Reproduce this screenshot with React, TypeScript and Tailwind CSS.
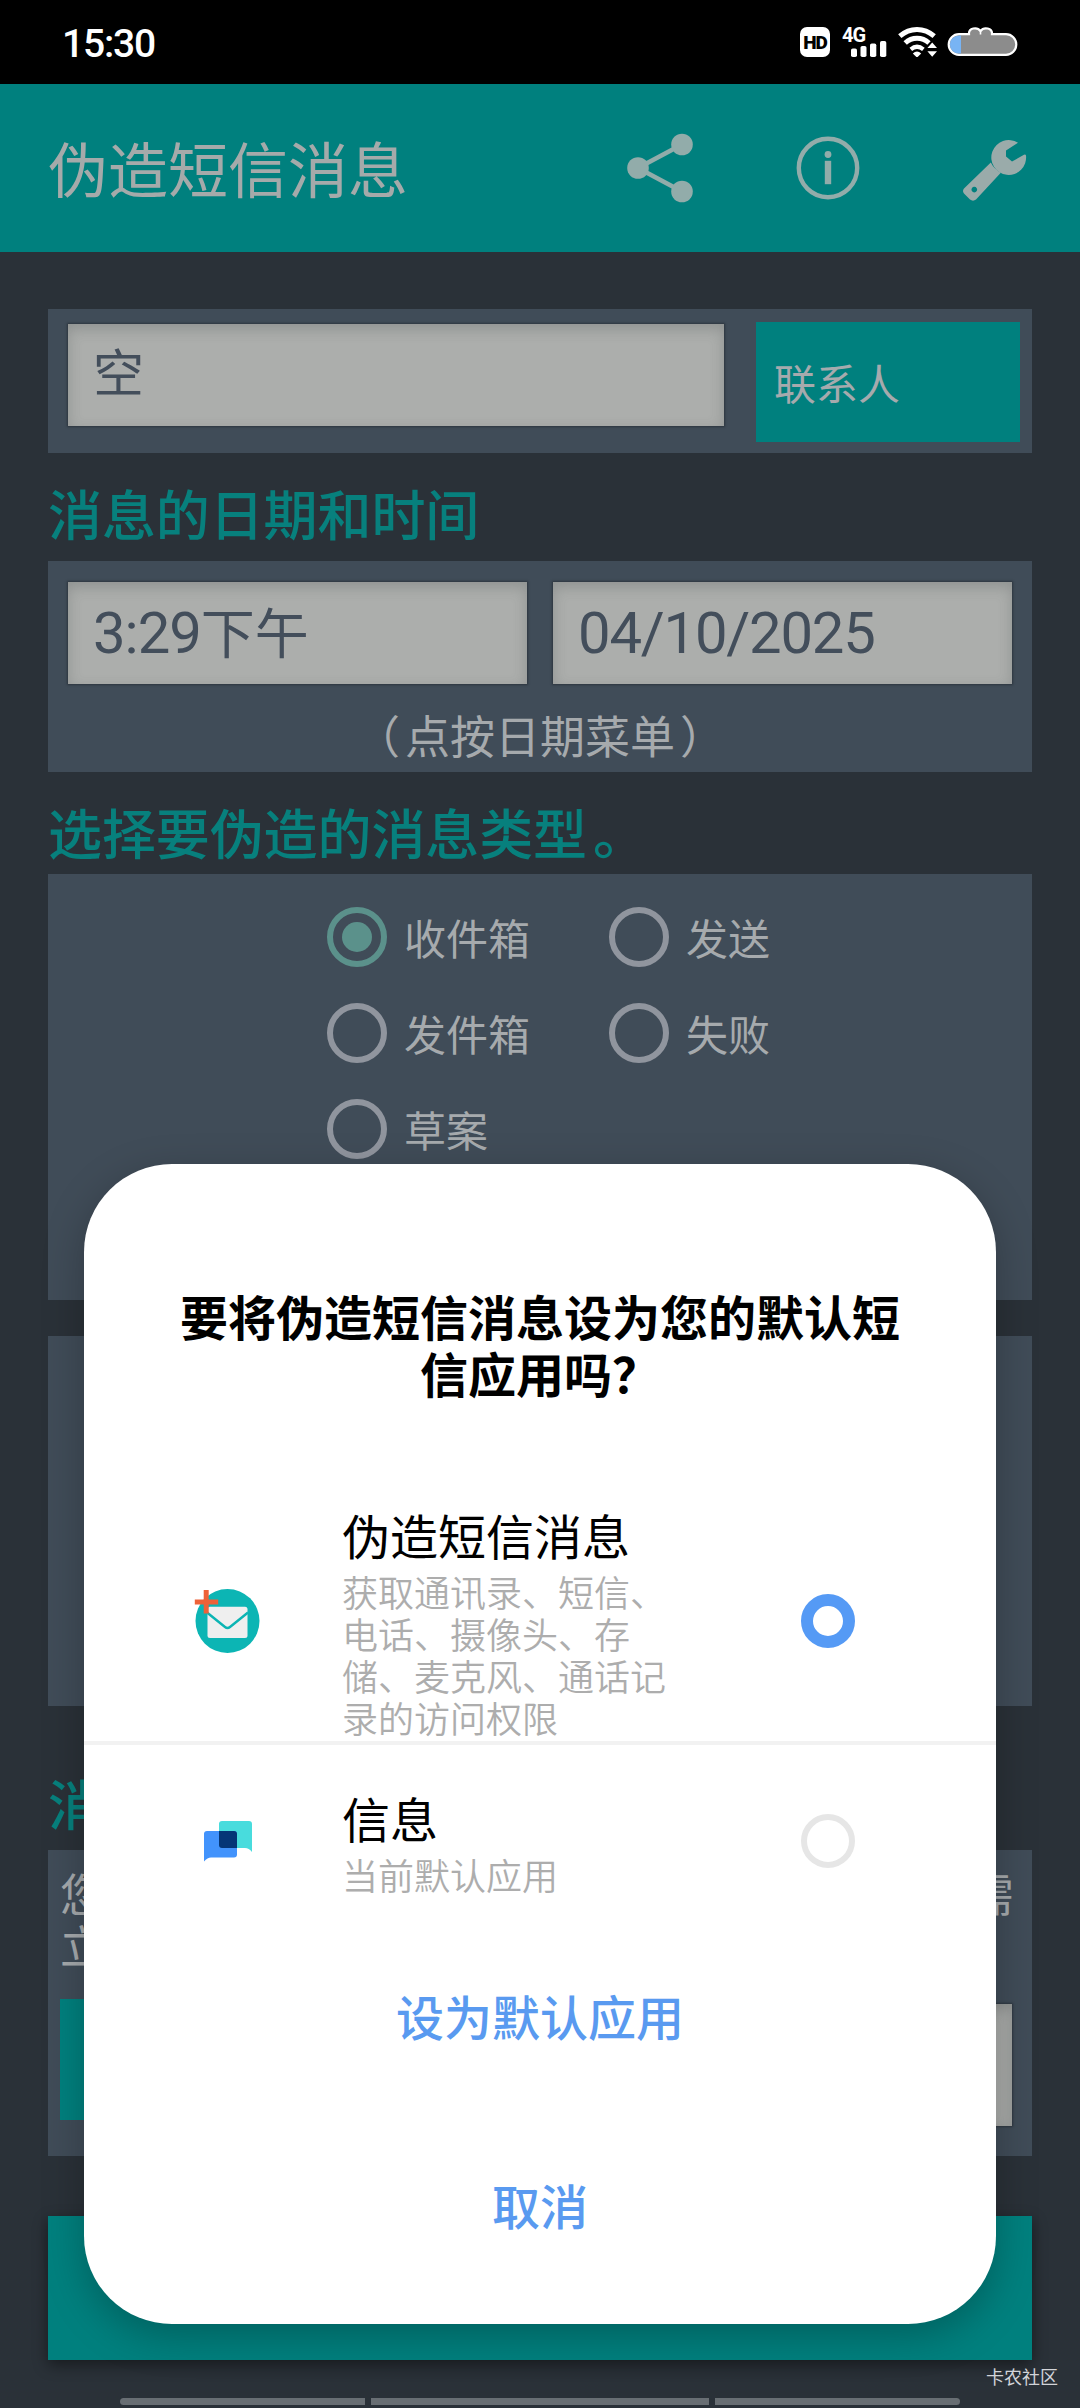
import { useState } from "react";

type AppOption = {
    id: string;
    name: string;
    detail: string;
};

const FOLDERS = ["收件箱", "发送", "发件箱", "失败", "草案"];

const APPS: AppOption[] = [
    {
        id: "fake",
        name: "伪造短信消息",
        detail: "获取通讯录、短信、电话、摄像头、存储、麦克风、通话记录的访问权限",
    },
    { id: "messages", name: "信息", detail: "当前默认应用" },
];

function StatusBar() {
    return (
        <div className="flex h-[84px] items-center justify-between bg-black pl-[62px] pr-[62px] text-white">
            <span className="font-[Roboto] text-[39px] leading-[44px] tracking-[-1.2px] font-medium pt-[4px]">
                15:30
            </span>
            <div className="flex items-center">
                <span className="flex h-[30px] w-[30px] items-center justify-center rounded-[7px] bg-white font-[Roboto] text-[19px] leading-none font-black tracking-[-1px] text-black">
                    HD
                </span>
                <div className="relative ml-[12px] h-[30px] w-[45px]">
                    <span className="absolute left-0 top-0 font-[Roboto] text-[20px] leading-[16px] font-bold tracking-[-1px]">
                        4G
                    </span>
                    <svg className="absolute inset-0" width="45" height="30" fill="#fff">
                        <rect x="9" y="21.5" width="6" height="8.5" rx="1.8" />
                        <rect x="18.5" y="19" width="6" height="11" rx="1.8" />
                        <rect x="28" y="16.5" width="6.3" height="13.5" rx="1.8" />
                        <rect x="38" y="14" width="6.3" height="16" rx="1.8" />
                    </svg>
                </div>
                <svg className="ml-[11px]" width="40" height="30" viewBox="0 0 40 30">
                    <g fill="none" stroke="#fff" strokeWidth="5">
                        <path d="M1.8 9.2C12 0.3 26 0.3 36.2 9.2" />
                        <path d="M7.2 16C14 9.8 24 9.8 31 16" />
                        <path d="M12.8 22.3C16.8 19 21.2 19 25.4 22.3" strokeWidth="4.2" />
                    </g>
                    <path
                        d="M14.8 26.4Q19 22.8 23.2 26.4L19 30.6Z"
                        fill="#fff"
                    />
                    <path d="M34.2 14L41 22H27.5Z" fill="#000" />
                    <path d="M34.2 15.5L39 21H29.4ZM29.4 24.2H39L34.2 29.8Z" fill="#fff" />
                </svg>
                <svg className="ml-[9px]" width="71" height="30" viewBox="0 0 71 30">
                    <path
                        d="M12 7.2H22C21.5 1 30 -0.6 33.5 4C37 -0.6 45.5 1 45 7.2H59A10.3 10.3 0 0 1 59 27.8H12A10.3 10.3 0 0 1 12 7.2Z"
                        fill="#8c8c8c"
                        stroke="#fff"
                        strokeWidth="2.2"
                    />
                    <path d="M14 8.4H12A9.1 9.1 0 0 0 12 26.6H14Z" fill="#78b4f4" />
                    <path d="M33.5 4V7.5" stroke="#fff" strokeWidth="1.6" />
                </svg>
            </div>
        </div>
    );
}

function Toolbar() {
    return (
        <header className="flex h-[168px] items-center bg-[#00807e] pl-[48px] pr-[51px]">
            <h1 className="flex-1 pb-[3px] text-[60px] leading-[72px] text-[#a5aaaa]">
                伪造短信消息
            </h1>
            <svg className="mr-[102px]" width="68" height="70" viewBox="0 0 68 70" fill="#92acaa">
                <path d="M56 11.5L12 35L56 58.5" fill="none" stroke="#92acaa" strokeWidth="4.6" />
                <circle cx="56" cy="11.5" r="10.8" />
                <circle cx="12" cy="35" r="10.8" />
                <circle cx="56" cy="58.5" r="10.8" />
            </svg>
            <svg className="mr-[103px]" width="64" height="64" viewBox="0 0 64 64" fill="#92acaa">
                <circle cx="32" cy="32" r="29.2" fill="none" stroke="#92acaa" strokeWidth="4.4" />
                <circle cx="32" cy="18.5" r="3.4" />
                <rect x="28.8" y="24.8" width="6.4" height="23.4" />
            </svg>
            <svg className="mt-[2px]" width="66" height="66" viewBox="1 0 66 66" fill="#9aabaa">
                <path d="M56 6.8A17.4 17.4 0 1 0 64 19.5Q63.5 18 62 18.8L50 25.6L44 20.5V14.5Z" />
                <path
                    fillRule="evenodd"
                    d="M28.8 26.6Q32 33 38.8 36.8L14 63.6Q11 65.8 8 63.6L2 57.4Q0 55 2 52.6ZM12.3 50.8a2.8 2.8 0 1 0 0.01 0Z"
                />
            </svg>
        </header>
    );
}

function Field({ className, children }: { className: string; children?: React.ReactNode }) {
    return (
        <div
            className={`flex items-center bg-[#acaeac] pl-[25px] text-[#434e5b] shadow-[inset_0_5px_14px_rgba(70,75,75,0.28),0_0_2px_1px_rgba(30,36,42,0.55)] ${className}`}
        >
            {children}
        </div>
    );
}

function SectionTitle({ children, className }: { children: React.ReactNode; className: string }) {
    return (
        <h2 className={`text-[54px] leading-[64px] font-medium tracking-[-0.1px] text-[#07807d] ${className}`}>
            {children}
        </h2>
    );
}

function FolderRadio({ label, checked, onSelect }: { label: string; checked: boolean; onSelect: () => void }) {
    return (
        <button className="flex h-[96px] items-center" onClick={onSelect}>
            <span
                className={`flex h-[60px] w-[60px] items-center justify-center rounded-full border-[6px] ${
                    checked ? "border-[#5b918b]" : "border-[#90959e]"
                }`}
            >
                {checked && <span className="h-[30px] w-[30px] rounded-full bg-[#5b918b]" />}
            </span>
            <span className="ml-[17px] text-[42px] leading-[50px] text-[#a6aaad]">{label}</span>
        </button>
    );
}

function FakeSmsIcon() {
    return (
        <svg width="68" height="70" viewBox="0 2 68 70">
            <circle cx="34.5" cy="37" r="32" fill="#0cb5b4" />
            <rect x="14.5" y="22.7" width="40" height="31.3" rx="2.5" fill="#efefef" />
            <path d="M14 28.5L32 43Q34.5 45 37 43L55 28.5" fill="none" stroke="#0cb5b4" strokeWidth="2.4" />
            <path d="M13.2 6V29.6M1.8 18H25.2" stroke="#ee6238" strokeWidth="5" />
        </svg>
    );
}

function MessagesIcon() {
    return (
        <svg width="68" height="70" viewBox="0 0 68 70">
            <path d="M29 15H56Q59 15 59 18V46Q56 42 52 42H29Q26 42 26 39V18Q26 15 29 15Z" fill="#48dcdd" />
            <path d="M14 25H41Q44 25 44 28V48.5Q44 51.5 41 51.5H18Q14.5 51.5 11 55.5V28Q11 25 14 25Z" fill="#4293fc" />
            <path d="M26 25H41Q44 25 44 28V42H29Q26 42 26 39Z" fill="#053677" />
        </svg>
    );
}

function DefaultAppDialog() {
    const [selected, setSelected] = useState("fake");

    return (
        <div className="absolute left-[84px] top-[1164px] flex h-[1160px] w-[912px] flex-col rounded-[88px] bg-white shadow-[0_12px_40px_rgba(0,0,0,0.25)]">
            <h3 className="px-[96px] pt-[123px] text-center text-[48px] leading-[57px] font-bold text-black">
                要将伪造短信消息设为您的默认短信应用吗？
            </h3>
            <div className="mt-[100px]">
                {APPS.map((app, i) => (
                    <button
                        key={app.id}
                        onClick={() => setSelected(app.id)}
                        className={`flex w-full items-center text-left ${
                            i === 0
                                ? "h-[244px] border-b-4 border-[#f2f2f2]"
                                : "h-[192px]"
                        }`}
                    >
                        <span className="ml-[109px] mr-[81px]">
                            {app.id === "fake" ? <FakeSmsIcon /> : <MessagesIcon />}
                        </span>
                        <span className="flex w-[326px] flex-col gap-[6px]">
                            <span className="text-[48px] leading-[60px] text-black">{app.name}</span>
                            <span className="text-[36px] leading-[42px] font-[350] text-[#adadad]">
                                {app.detail}
                            </span>
                        </span>
                        <span
                            className={`ml-[133px] h-[54px] w-[54px] rounded-full ${
                                selected === app.id
                                    ? "border-[12px] border-[#559af5]"
                                    : "border-[6px] border-[#e6e6e6]"
                            }`}
                        />
                    </button>
                ))}
            </div>
            <button className="mt-[42px] h-[70px] text-[48px] font-medium text-[#599af0]">
                设为默认应用
            </button>
            <button className="mt-[119px] h-[70px] text-[48px] font-medium text-[#599af0]">
                取消
            </button>
        </div>
    );
}

export default function App() {
    const [folder, setFolder] = useState(FOLDERS[0]);

    return (
        <main className="relative flex h-[2408px] w-[1080px] flex-col overflow-hidden bg-[#2a3138] font-['Noto_Sans_CJK_SC',sans-serif]">
            <StatusBar />
            <Toolbar />

            <div className="flex flex-col px-[48px] pt-[57px]">
                <section className="flex h-[144px] items-start bg-[#404c58] pl-[20px]">
                    <Field className="mt-[15px] h-[102px] w-[656px]">
                        <span className="pb-[11px] text-[51px] leading-[60px]">空</span>
                    </Field>
                    <button className="ml-[32px] mt-[13px] h-[120px] w-[264px] bg-[#00807e] pb-[2px] pl-[18px] text-left text-[42px] text-[#a6aaad]">
                        联系人
                    </button>
                </section>

                <SectionTitle className="h-[108px] pt-[28px]">消息的日期和时间</SectionTitle>

                <section className="h-[211px] bg-[#404c58] px-[20px] pt-[21px]">
                    <div className="flex gap-[26px]">
                        <Field className="h-[102px] flex-1">
                            <span className="font-[Roboto] text-[58px] leading-[60px] tracking-[-1px]">3:29</span>
                            <span className="pb-[5px] text-[54px] leading-[60px]">下午</span>
                        </Field>
                        <Field className="h-[102px] flex-1">
                            <span className="font-[Roboto] text-[58px] leading-[60px] tracking-[-1.2px]">
                                04/10/2025
                            </span>
                        </Field>
                    </div>
                    <p className="mt-[24px] text-center text-[45px] leading-[54px] text-[#a6aaad]">
                        <span className="mr-[5px]">（</span>
                        点按日期菜单
                        <span className="ml-[5px]">）</span>
                    </p>
                </section>

                <SectionTitle className="h-[102px] pt-[28px]">
                    选择要伪造的消息类型<span className="ml-[6px]">。</span>
                </SectionTitle>

                <section className="h-[426px] bg-[#404c58] pl-[279px] pt-[15px]">
                    <div className="grid w-[500px] grid-cols-[282px_218px]">
                        {FOLDERS.map((name) => (
                            <FolderRadio
                                key={name}
                                label={name}
                                checked={folder === name}
                                onSelect={() => setFolder(name)}
                            />
                        ))}
                    </div>
                </section>

                <section className="mt-[36px] h-[370px] bg-[#404c58]" />

                <SectionTitle className="h-[144px] pt-[65px]">消息</SectionTitle>

                <section className="h-[306px] bg-[#404c58] px-[12px] pt-[17px] text-[45px] leading-[52px] text-[#a6aaad]">
                    <div className="flex justify-between pr-[6px]">
                        <span>您</span>
                        <span>需</span>
                    </div>
                    <p>立</p>
                    <div className="mt-[28px] flex items-start justify-between pr-[8px]">
                        <div className="h-[121px] w-[264px] bg-[#00807e]" />
                        <Field className="mt-[5px] h-[122px] w-[600px]" />
                    </div>
                </section>

                <button className="mt-[60px] h-[144px] bg-[#00807e] shadow-[0_5px_14px_rgba(0,0,0,0.45)]" />
            </div>

            <div className="mt-[3px] flex h-[26px] justify-end pr-[22px] text-[18px] leading-[26px] text-[#d2d4d8]">
                卡农社区
            </div>
            <div className="mt-[9px] flex h-[7px] shrink-0 gap-[6px] px-[120px]">
                <span className="w-[245px] rounded-l-full bg-[#686e73]" />
                <span className="w-[338px] bg-[#686e73]" />
                <span className="w-[245px] rounded-r-full bg-[#686e73]" />
            </div>

            <DefaultAppDialog />
        </main>
    );
}
